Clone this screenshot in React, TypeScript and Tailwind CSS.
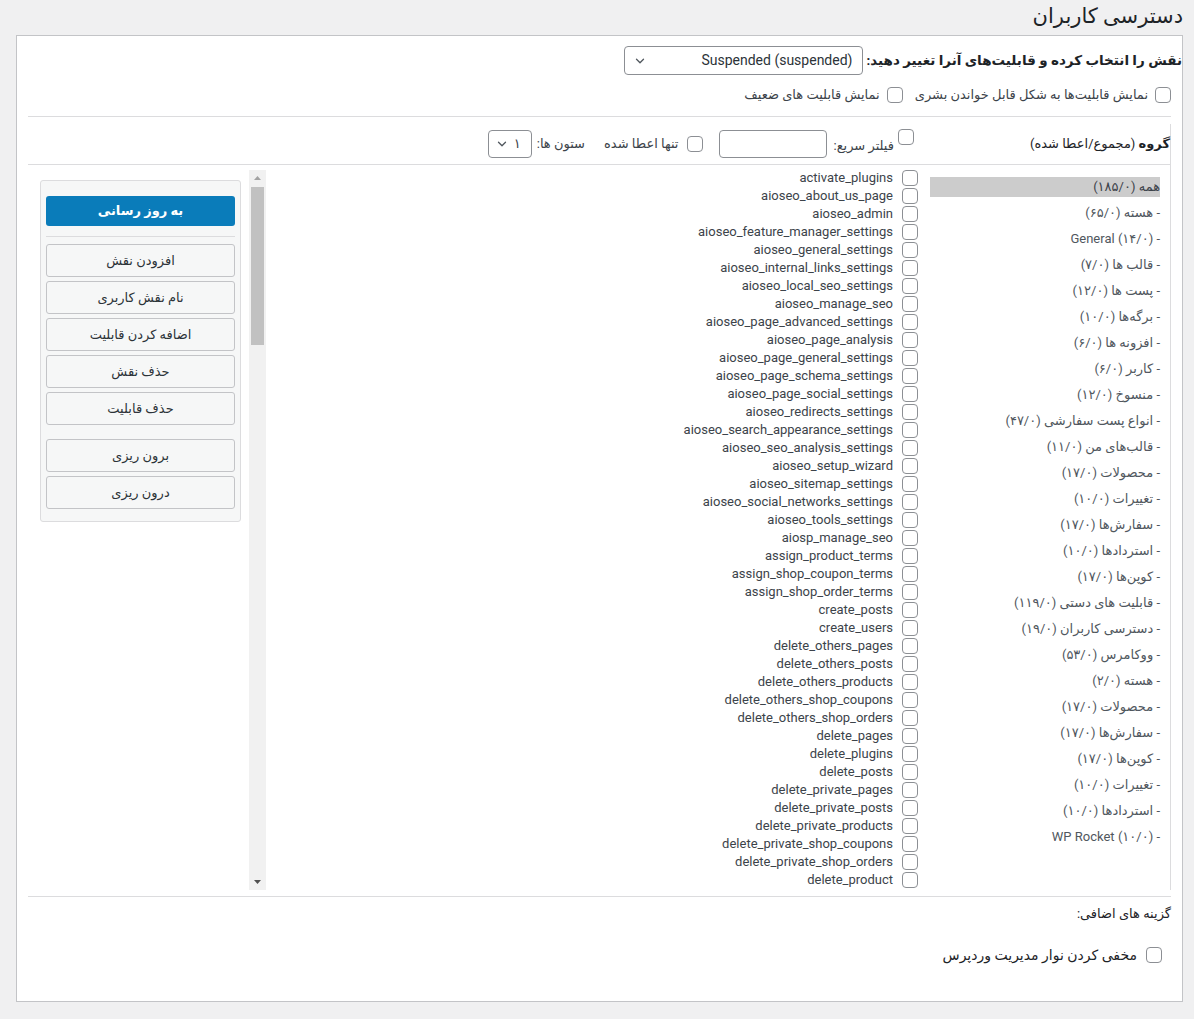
import React from "react";

const caps = [
  "activate_plugins",
  "aioseo_about_us_page",
  "aioseo_admin",
  "aioseo_feature_manager_settings",
  "aioseo_general_settings",
  "aioseo_internal_links_settings",
  "aioseo_local_seo_settings",
  "aioseo_manage_seo",
  "aioseo_page_advanced_settings",
  "aioseo_page_analysis",
  "aioseo_page_general_settings",
  "aioseo_page_schema_settings",
  "aioseo_page_social_settings",
  "aioseo_redirects_settings",
  "aioseo_search_appearance_settings",
  "aioseo_seo_analysis_settings",
  "aioseo_setup_wizard",
  "aioseo_sitemap_settings",
  "aioseo_social_networks_settings",
  "aioseo_tools_settings",
  "aiosp_manage_seo",
  "assign_product_terms",
  "assign_shop_coupon_terms",
  "assign_shop_order_terms",
  "create_posts",
  "create_users",
  "delete_others_pages",
  "delete_others_posts",
  "delete_others_products",
  "delete_others_shop_coupons",
  "delete_others_shop_orders",
  "delete_pages",
  "delete_plugins",
  "delete_posts",
  "delete_private_pages",
  "delete_private_posts",
  "delete_private_products",
  "delete_private_shop_coupons",
  "delete_private_shop_orders",
  "delete_product",
];

type G = { name: string; count: string; ltr?: boolean; top?: boolean };

const groups: G[] = [
  { name: "همه", count: "(۱۸۵/۰)", top: true },
  { name: "هسته", count: "(۶۵/۰)" },
  { name: "General", count: "(۱۴/۰)", ltr: true },
  { name: "قالب ها", count: "(۷/۰)" },
  { name: "پست ها", count: "(۱۲/۰)" },
  { name: "برگه\u200cها", count: "(۱۰/۰)" },
  { name: "افزونه ها", count: "(۶/۰)" },
  { name: "کاربر", count: "(۶/۰)" },
  { name: "منسوخ", count: "(۱۲/۰)" },
  { name: "انواع پست سفارشی", count: "(۴۷/۰)" },
  { name: "قالب\u200cهای من", count: "(۱۱/۰)" },
  { name: "محصولات", count: "(۱۷/۰)" },
  { name: "تغییرات", count: "(۱۰/۰)" },
  { name: "سفارش\u200cها", count: "(۱۷/۰)" },
  { name: "استردادها", count: "(۱۰/۰)" },
  { name: "کوپن\u200cها", count: "(۱۷/۰)" },
  { name: "قابلیت های دستی", count: "(۱۱۹/۰)" },
  { name: "دسترسی کاربران", count: "(۱۹/۰)" },
  { name: "ووکامرس", count: "(۵۳/۰)" },
  { name: "هسته", count: "(۲/۰)" },
  { name: "محصولات", count: "(۱۷/۰)" },
  { name: "سفارش\u200cها", count: "(۱۷/۰)" },
  { name: "کوپن\u200cها", count: "(۱۷/۰)" },
  { name: "تغییرات", count: "(۱۰/۰)" },
  { name: "استردادها", count: "(۱۰/۰)" },
  { name: "WP Rocket", count: "(۱۰/۰)", ltr: true },
];

function Box({ className = "" }: { className?: string }) {
  return (
    <span
      className={
        "inline-block w-4 h-4 shrink-0 rounded-[4px] border border-[#8c8f94] bg-white " +
        className
      }
    />
  );
}

function Chevron() {
  return (
    <svg width="14" height="14" viewBox="0 0 16 16" fill="none">
      <path d="M4 6l4 4 4-4" stroke="#50575e" strokeWidth="1.5" strokeLinecap="round" strokeLinejoin="round" />
    </svg>
  );
}

const buttons1 = ["افزودن نقش", "نام نقش کاربری", "اضافه کردن قابلیت", "حذف نقش", "حذف قابلیت"];
const buttons2 = ["برون ریزی", "درون ریزی"];

export default function App() {
  return (
    <div
      dir="rtl"
      className="min-h-[1019px] bg-[#f0f0f1] pr-[11px] pl-[16px] text-[13px] text-[#3c434a] font-[Roboto,'DejaVu_Sans',sans-serif]"
    >
      <h1 className="h-[35px] text-[21px] leading-[33px] font-normal text-[#1d2327]">
        دسترسی کاربران
      </h1>

      <div className="h-[967px] border border-[#c3c4c7] bg-white px-[11px] pt-[10px]">
        {/* role select row */}
        <div className="flex items-center gap-[3px] -mr-[11px]">
          <span className="text-[13.5px] font-bold text-[#1d2327]">
            {"نقش را انتخاب کرده و قابلیت\u200cهای آنرا تغییر دهید:"}
          </span>
          <div className="flex h-[29px] w-[239px] items-center justify-between rounded-[4px] border border-[#8c8f94] bg-white pr-[10px] pl-[8px]">
            <span dir="ltr" className="text-[14px] text-[#2c3338]">
              Suspended (suspended)
            </span>
            <Chevron />
          </div>
        </div>

        {/* options row */}
        <div className="mt-[12px] flex h-[30px] items-start border-b border-[#dcdcde] leading-[16px]">
          <Box />
          <span className="mr-[7px]">{"نمایش قابلیت\u200cها به شکل قابل خواندن بشری"}</span>
          <Box className="mr-[12px]" />
          <span className="mr-[7px]">نمایش قابلیت های ضعیف</span>
        </div>

        {/* table */}
        <div className="mt-[7px] border-r border-[#dcdcde]">
          <div className="flex h-[41px] items-center border-b border-[#dcdcde] leading-[18px]">
            <div className="w-[252px] shrink-0 text-[#1d2327]">
              <b>گروه</b> (مجموع/اعطا شده)
            </div>
            <Box className="mr-[4px] self-start mt-[5px]" />
            <span className="mr-[4px] mt-[4px]">فیلتر سریع:</span>
            <div className="mr-[6px] h-[28px] w-[108px] rounded-[4px] border border-[#8c8f94] bg-white" />
            <Box className="mr-[16px]" />
            <span className="mr-[9px]">تنها اعطا شده</span>
            <span className="mr-[19px]">ستون ها:</span>
            <div className="mr-[5px] flex h-[28px] w-[44px] items-center justify-between rounded-[4px] border border-[#8c8f94] bg-white pr-[10px] pl-[6px]">
              <span>۱</span>
              <Chevron />
            </div>
          </div>

          <div className="flex h-[725px]">
            {/* groups */}
            <div className="w-[252px] shrink-0 pr-[10px] pl-[12px] pt-[12px] text-[#50575e]">
              {groups.map((g, i) => (
                <div
                  key={i}
                  className={
                    "mb-[6px] h-[20px] leading-[20px] whitespace-nowrap " +
                    (g.top ? "bg-[#cccccc] text-[#3c434a]" : "")
                  }
                >
                  {g.top ? (
                    <span>
                      {g.name} {g.count}
                    </span>
                  ) : g.ltr ? (
                    <span>
                      {"- "}
                      <span dir="ltr">
                        {g.name} {g.count}
                      </span>
                    </span>
                  ) : (
                    <span>
                      - {g.name} {g.count}
                    </span>
                  )}
                </div>
              ))}
            </div>

            {/* capabilities */}
            <div className="mt-[4px] h-[721px] w-[652px] shrink-0 overflow-hidden">
              {caps.map((c) => (
                <div key={c} className="flex h-[18px] items-center gap-[9px]">
                  <Box />
                  <span className="text-[13px] leading-[18px] text-[#3c434a]">{c}</span>
                </div>
              ))}
            </div>

            {/* fake scrollbar */}
            <div className="mt-[5px] flex h-[720px] w-[17px] shrink-0 flex-col items-center bg-[#f1f1f1]">
              <div className="flex h-[16px] w-full items-center justify-center">
                <svg width="7" height="4" viewBox="0 0 7 4">
                  <path d="M3.5 0L7 4H0z" fill="#a3a3a3" />
                </svg>
              </div>
              <div className="mt-[1px] h-[158px] w-[13px] bg-[#c1c1c1]" />
              <div className="flex-1" />
              <div className="flex h-[17px] w-full items-center justify-center">
                <svg width="7" height="4" viewBox="0 0 7 4">
                  <path d="M0 0H7L3.5 4z" fill="#505050" />
                </svg>
              </div>
            </div>

            {/* buttons panel */}
            <div className="w-[221px] shrink-0">
              <div className="mr-[8px] mt-[15px] w-[201px] rounded-[3px] border border-[#dcdcde] bg-[#f6f7f7] px-[5px] pt-[15px] pb-[8px]">
                <div className="flex h-[30px] items-center justify-center rounded-[3px] bg-[#0a7cba] font-bold text-white">
                  به روز رسانی
                </div>
                <div className="mt-[10px] mb-[7px] border-t border-[#dcdcde]" />
                {buttons1.map((b) => (
                  <div
                    key={b}
                    className="mb-[4px] flex h-[33px] items-center justify-center rounded-[3px] border border-[#c3c4c7] bg-[#f6f7f7] text-[#2c3338]"
                  >
                    {b}
                  </div>
                ))}
                <div className="h-[10px]" />
                {buttons2.map((b) => (
                  <div
                    key={b}
                    className="mb-[4px] flex h-[33px] items-center justify-center rounded-[3px] border border-[#c3c4c7] bg-[#f6f7f7] text-[#2c3338]"
                  >
                    {b}
                  </div>
                ))}
              </div>
            </div>
          </div>
        </div>

        {/* extra options */}
        <div className="mt-[6px] border-t border-[#dcdcde] pt-[7px]">
          <div className="leading-[20px] text-[#1d2327]">گزینه های اضافی:</div>
          <div className="mt-[22px] flex items-center pr-[9px]">
            <Box />
            <span className="mr-[9px] text-[14px] leading-[18px] text-[#1d2327]">مخفی کردن نوار مدیریت وردپرس</span>
          </div>
        </div>
      </div>
    </div>
  );
}
